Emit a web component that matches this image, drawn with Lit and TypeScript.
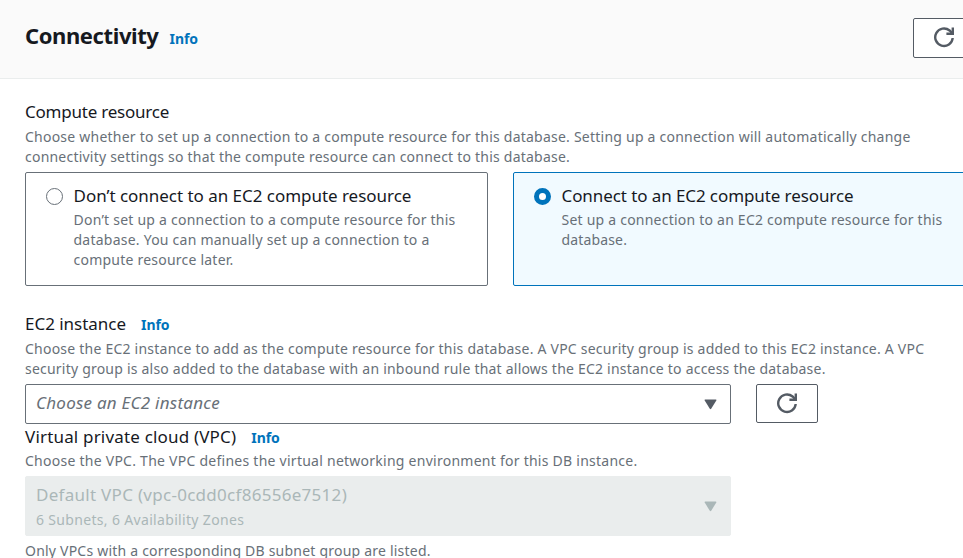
import { LitElement, html, css, svg } from "lit";
import { customElement, property } from "lit/decorators.js";
import { classMap } from "lit/directives/class-map.js";

type Line = [text: string, tracking: number];

const line = ([text, tracking]: Line) =>
  html`<span class="line" style="letter-spacing:${tracking}px">${text}</span>`;

const typography = css`
  * {
    box-sizing: border-box;
  }
  .line {
    display: block;
    white-space: nowrap;
  }
  .label {
    font-size: 17px;
    line-height: 26px;
    color: #16191f;
  }
  .hint {
    font-size: 14px;
    line-height: 20px;
    color: #687078;
  }
`;

const arrow = svg`<path d="M1.2 .5H11.8Q12.8.5 12.3 1.4L7.2 9.8Q6.5 10.7 5.8 9.8L.7 1.4Q.2.5 1.2.5Z" fill="currentColor"/>`;

@customElement("refresh-button")
export class RefreshButton extends LitElement {
  static styles = css`
    :host {
      display: block;
      flex: none;
      height: 39px;
    }
    button {
      box-sizing: border-box;
      display: flex;
      align-items: center;
      justify-content: center;
      width: 62px;
      height: 100%;
      padding: 0;
      border: 1px solid #545b64;
      border-radius: 2px;
      background: #fff;
      color: #545b64;
    }
    svg {
      display: block;
    }
  `;
  render() {
    return html`<button aria-label="Refresh">
      <svg width="22" height="22" viewBox="0 0 22 22" fill="none" stroke="currentColor" stroke-width="2.4">
        <path d="M19.7 11A8.75 8.75 0 1 1 16.6 3.5L19 6" />
        <path d="M19.8 .4V6.8H13.4" />
      </svg>
    </button>`;
  }
}

@customElement("option-tile")
export class OptionTile extends LitElement {
  @property({ type: Boolean }) checked = false;
  @property({ attribute: false }) label: Line = ["", 0];
  @property({ attribute: false }) hint: Line[] = [];
  static styles = [
    typography,
    css`
      :host {
        display: block;
      }
      .tile {
        display: flex;
        gap: 10.5px;
        height: 114px;
        padding: 10px 20px;
        border: 1px solid #687078;
        border-radius: 2px;
        background: #fff;
      }
      .label {
        height: 27px;
      }
      .radio {
        flex: none;
        width: 17px;
        height: 17px;
        margin-top: 5px;
        border: 1px solid #687078;
        border-radius: 50%;
        background: #fff;
      }
      .checked {
        border-color: #0073bb;
        background: #f1faff;
      }
      .checked .radio {
        border: 5px solid #0073bb;
      }
    `,
  ];
  render() {
    return html`<div class=${classMap({ tile: true, checked: this.checked })}>
      <div class="radio"></div>
      <div>
        <div class="label">${line(this.label)}</div>
        <div class="hint">${this.hint.map(line)}</div>
      </div>
    </div>`;
  }
}

@customElement("app-root")
export class AppRoot extends LitElement {
  static styles = [
    typography,
    css`
      :host {
        display: block;
        height: 558px;
        overflow: hidden;
        background: #fff;
        font-family: "Noto Sans", "Open Sans", sans-serif;
      }
      .header {
        display: flex;
        justify-content: space-between;
        height: 79px;
        padding: 18px 0 0 25px;
        overflow: hidden;
        border-bottom: 1px solid #eaeded;
        background: #fafafa;
      }
      .title {
        display: flex;
        align-items: baseline;
        gap: 11px;
        height: 36px;
        margin-top: -1px;
      }
      h2 {
        margin: 0;
        font-size: 22px;
        line-height: 36px;
        color: #16191f;
      }
      .header refresh-button {
        height: 40px;
        margin-right: -12px;
      }
      .info {
        font-size: 14px;
        font-weight: 700;
        line-height: 20px;
        color: #0073bb;
        text-decoration: none;
      }
      .body {
        padding: 20px 0 0 25px;
      }
      .heading {
        height: 28px;
      }
      .tiles {
        display: grid;
        grid-template-columns: 463px 463px;
        gap: 25px;
        margin: 5px 0 25px;
      }
      .named {
        display: flex;
        align-items: baseline;
        gap: 15px;
        height: 27px;
      }
      .named.roomy {
        height: 28px;
      }
      .row {
        display: flex;
        gap: 25px;
        margin-top: 5px;
      }
      .select {
        display: flex;
        align-items: center;
        justify-content: space-between;
        width: 706px;
        height: 40px;
        padding: 0 13.5px 0 10px;
        border: 1px solid #687078;
        border-radius: 2px;
        color: #545b64;
      }
      .placeholder {
        margin-top: -2px;
        font-size: 17px;
        font-style: italic;
        line-height: 26px;
        color: #687078;
      }
      .disabled {
        height: 60px;
        margin: 5px 0;
        border-color: #eaeded;
        background: #eaeded;
        color: #aab7b8;
      }
      .disabled .label,
      .disabled .hint {
        color: #aab7b8;
      }
      .disabled .label {
        height: 28px;
      }
    `,
  ];
  private info() {
    return html`<a class="info">${line(["Info", -0.05])}</a>`;
  }
  private arrow() {
    return html`<svg width="13" height="11" viewBox="0 0 13 11">${arrow}</svg>`;
  }
  render() {
    return html`
      <div class="header">
        <div class="title"><h2>${line(["Connectivity", -0.4])}</h2>${this.info()}</div>
        <refresh-button></refresh-button>
      </div>
      <div class="body">
        <div class="label heading">${line(["Compute resource", -0.22])}</div>
        <div class="hint">
          ${line(["Choose whether to set up a connection to a compute resource for this database. Setting up a connection will automatically change", 0.232])}
          ${line(["connectivity settings so that the compute resource can connect to this database.", 0.22])}
        </div>
        <div class="tiles">
          <option-tile
            .label=${["Don’t connect to an EC2 compute resource", -0.03]}
            .hint=${[
              ["Don’t set up a connection to a compute resource for this", 0.231],
              ["database. You can manually set up a connection to a", 0.235],
              ["compute resource later.", 0.225],
            ]}
          ></option-tile>
          <option-tile
            checked
            .label=${["Connect to an EC2 compute resource", -0.09]}
            .hint=${[
              ["Set up a connection to an EC2 compute resource for this", 0.225],
              ["database.", 0.15],
            ]}
          ></option-tile>
        </div>
        <div class="named roomy"><div class="label">${line(["EC2 instance", -0.025])}</div>${this.info()}</div>
        <div class="hint">
          ${line(["Choose the EC2 instance to add as the compute resource for this database. A VPC security group is added to this EC2 instance. A VPC", 0.228])}
          ${line(["security group is also added to the database with an inbound rule that allows the EC2 instance to access the database.", 0.215])}
        </div>
        <div class="row">
          <div class="select"><div class="placeholder">${line(["Choose an EC2 instance", 0.248])}</div>${this.arrow()}</div>
          <refresh-button></refresh-button>
        </div>
        <div class="named"><div class="label">${line(["Virtual private cloud (VPC)", 0.18])}</div>${this.info()}</div>
        <div class="hint">${line(["Choose the VPC. The VPC defines the virtual networking environment for this DB instance.", 0.255])}</div>
        <div class="select disabled">
          <div>
            <div class="label">${line(["Default VPC (vpc-0cdd0cf86556e7512)", 0.285])}</div>
            <div class="hint">${line(["6 Subnets, 6 Availability Zones", 0.33])}</div>
          </div>
          ${this.arrow()}
        </div>
        <div class="hint">${line(["Only VPCs with a corresponding DB subnet group are listed.", 0.215])}</div>
      </div>
    `;
  }
}
